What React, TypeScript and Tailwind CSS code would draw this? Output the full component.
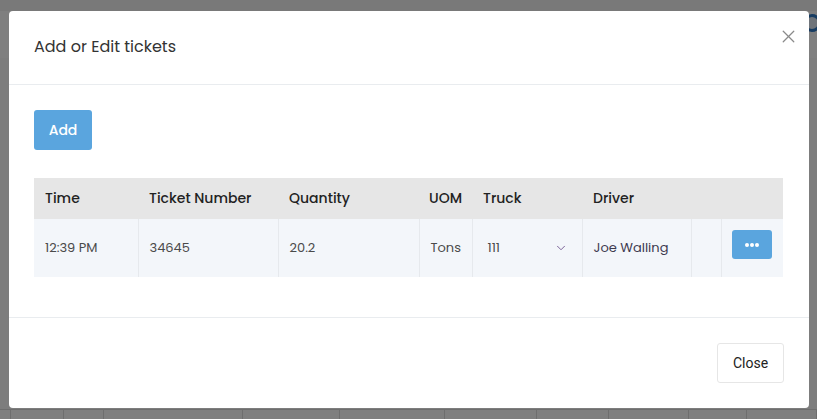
import { X, ChevronDown } from 'lucide-react'

const bgCols = [11, 53, 40, 139, 97, 105, 92, 72, 80, 58, 70]

const font = { fontFamily: 'Poppins, Inter, "Noto Sans", sans-serif' }

function BackgroundPage() {
  return (
    <div className="flex h-full w-full flex-col bg-white">
      <div className="h-[11px] bg-[#f2f2f2]" />
      <div className="flex h-[47px] justify-end bg-white pt-[3px]">
        <div className="-mr-[4px] h-[18px] w-[18px] rounded-full border-[3px] border-[#2f78c4] bg-[#dfe9f5]" />
      </div>
      <div className="flex-1 bg-[#fbfbfb]" />
      <div className="flex h-[10px] border-t border-[#dcdcdc] bg-white">
        {bgCols.map((w, i) => (
          <div key={i} className="h-full border-r border-[#dcdcdc]" style={{ width: w }} />
        ))}
      </div>
    </div>
  )
}

export default function App() {
  return (
    <div className="relative h-[419px] w-[817px] overflow-hidden" style={font}>
      <BackgroundPage />

      {/* Overlay */}
      <div className="absolute inset-0 bg-black/50" />

      {/* Modal */}
      <div className="absolute left-[9px] top-[11px] flex h-[397px] w-[800px] flex-col rounded-[4px] bg-white">
        {/* Header */}
        <div className="flex h-[74px] items-start justify-between border-b border-[#e9ecef] pl-[25px] pr-[10px]">
          <h2 className="pt-[24px] text-[16px] leading-[24px] text-[#333]">Add or Edit tickets</h2>
          <button className="mt-[15px] text-[#8a8a8a]">
            <X className="h-[21px] w-[21px]" strokeWidth={1.5} />
          </button>
        </div>

        {/* Body */}
        <div className="flex h-[233px] flex-col border-b border-[#e9ecef] px-[25px] pt-[25px]">
          <div>
            <button className="h-[40px] w-[58px] rounded-[3px] bg-[#5aa5de] text-[14px] font-medium text-white">
              Add
            </button>
          </div>

          <table className="mt-[28px] w-[749px] table-fixed border-collapse text-left">
            <colgroup>
              <col className="w-[104px]" />
              <col className="w-[140px]" />
              <col className="w-[141px]" />
              <col className="w-[53px]" />
              <col className="w-[110px]" />
              <col className="w-[109px]" />
              <col className="w-[30px]" />
              <col className="w-[62px]" />
            </colgroup>
            <thead>
              <tr className="h-[41px] bg-[#e6e6e6] text-[14px] font-medium text-[#222]">
                <th className="px-[11px] font-medium">Time</th>
                <th className="px-[11px] font-medium">Ticket Number</th>
                <th className="px-[11px] font-medium">Quantity</th>
                <th className="px-[10px] font-medium">UOM</th>
                <th className="px-[11px] font-medium">Truck</th>
                <th className="px-[11px] font-medium">Driver</th>
                <th />
                <th />
              </tr>
            </thead>
            <tbody>
              <tr className="h-[58px] bg-[#f3f6fa] text-[13px] text-[#4a4a4a]">
                <td className="border-r border-[#e6e9ed] px-[11px]">12:39 PM</td>
                <td className="border-r border-[#e6e9ed] px-[11px]">34645</td>
                <td className="border-r border-[#e6e9ed] px-[11px]">20.2</td>
                <td className="border-r border-[#e6e9ed] px-[11px]">Tons</td>
                <td className="border-r border-[#e6e9ed] pl-[15px] pr-[14px]">
                  <div className="flex items-center justify-between">
                    <span>111</span>
                    <ChevronDown className="h-[14px] w-[14px] text-[#6b4f8a]" strokeWidth={1.5} />
                  </div>
                </td>
                <td className="border-r border-[#e6e9ed] px-[11px] text-[#3d3a4f]">Joe Walling</td>
                <td className="border-r border-[#e6e9ed]" />
                <td className="px-[10px]">
                  <button className="mb-[7px] flex h-[29px] w-[40px] items-center justify-center gap-[1px] rounded-[3px] bg-[#5aa5de]">
                    <span className="h-[4px] w-[4px] rounded-full bg-white" />
                    <span className="h-[4px] w-[4px] rounded-full bg-white" />
                    <span className="h-[4px] w-[4px] rounded-full bg-white" />
                  </button>
                </td>
              </tr>
            </tbody>
          </table>
        </div>

        {/* Footer */}
        <div className="flex flex-1 items-start justify-end pr-[25px] pt-[25px]">
          <button
            className="h-[40px] w-[67px] rounded-[3px] border border-[#e6e6e6] bg-white text-[14px] text-[#222]"
            style={{ fontFamily: 'Roboto, "Liberation Sans", sans-serif' }}
          >
            Close
          </button>
        </div>
      </div>
    </div>
  )
}
